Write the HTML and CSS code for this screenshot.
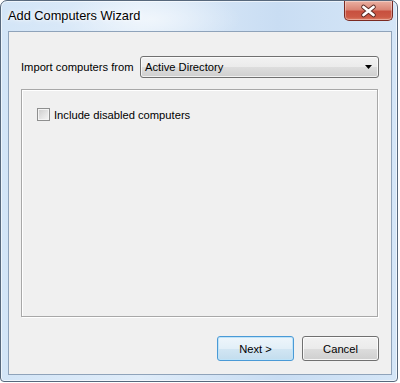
FILE: index.html
```html
<!DOCTYPE html>
<html>
<head>
    <title>Add Computers Wizard</title>
    <link rel="stylesheet" href="styles.css">
</head>
<body>
    <div class="window">
        <div class="titlebar">
            <span class="title">Add Computers Wizard</span>
            <button class="close-btn">
                <svg width="49" height="20" viewBox="0 0 49 20">
                    <path d="M19.5 6 L29.5 14 M29.5 6 L19.5 14" stroke="#5a2a24" stroke-width="4.6" stroke-linecap="round" fill="none"/>
                    <path d="M19.5 6 L29.5 14 M29.5 6 L19.5 14" stroke="#ffffff" stroke-width="2.8" stroke-linecap="round" fill="none"/>
                </svg>
            </button>
        </div>

        <div class="client">
            <!-- Source row -->
            <div class="import-row">
                <label class="import-label">Import computers from</label>
                <div class="combo">
                    <span>Active Directory</span>
                    <svg class="combo-arrow" width="8" height="5" viewBox="0 0 8 5">
                        <path d="M0 0 H7 L3.5 4 Z" fill="#000"/>
                    </svg>
                </div>
            </div>

            <!-- Options group -->
            <div class="group">
                <div class="check-row">
                    <span class="checkbox"></span>
                    <span>Include disabled computers</span>
                </div>
            </div>

            <div class="button-row">
                <button class="btn btn-default">Next &gt;</button>
                <button class="btn">Cancel</button>
            </div>
        </div>
    </div>
</body>
</html>
```

FILE: styles.css
```css
body {
    margin: 0;
    background: #ffffff;
    font-family: "Liberation Sans", Arial, sans-serif;
    font-size: 11.2px;
    color: #000000;
}

.window {
    width: 398px;
    height: 382px;
    box-sizing: border-box;
    border: 1px solid #57687c;
    border-radius: 7px 7px 4px 4px;
    padding: 0 5px 6px 7px;
    display: flex;
    flex-direction: column;
    background:
        radial-gradient(ellipse 90px 30px at 150px 18px, rgba(255,255,255,0.55), rgba(255,255,255,0)),
        linear-gradient(to right, #d3e5f7 0%, #dfecf9 35%, #c9ddf3 70%, #d5e6f7 100%);
    box-shadow: inset 0 0 0 1px rgba(255,255,255,0.6);
}

.titlebar {
    height: 30px;
    display: flex;
    align-items: flex-start;
}

.title {
    margin-top: 7px;
    font-size: 12.8px;
    color: #000;
    text-shadow: 0 0 6px #ffffff, 0 0 3px #ffffff;
}

.close-btn {
    margin-left: auto;
    margin-right: -1px;
    width: 49px;
    height: 20px;
    padding: 0;
    border: 1px solid #7a2a22;
    border-top: none;
    border-radius: 0 0 5px 5px;
    background: linear-gradient(to bottom, #eab0a2 0%, #da8676 45%, #c8503f 55%, #cc5a46 85%, #de8068 100%);
    box-shadow: inset 0 0 0 1px rgba(255,255,255,0.35);
    display: flex;
    align-items: center;
    justify-content: center;
}

.close-btn svg {
    display: block;
    margin: -1px;
}

.client {
    flex: 1;
    background: #f0f0f0;
    border: 1px solid #8fa3ba;
    padding: 0 12px;
    display: flex;
    flex-direction: column;
}

.import-row {
    margin-top: 24px;
    height: 22px;
    display: flex;
    align-items: center;
}

.import-label {
    flex: 1;
    white-space: nowrap;
}

.combo {
    width: 239px;
    height: 22px;
    flex-shrink: 0;
    box-sizing: border-box;
    border: 1px solid #707070;
    border-radius: 3px;
    background: linear-gradient(to bottom, #f2f2f2 0%, #ebebeb 50%, #dddddd 51%, #cfcfcf 100%);
    box-shadow: inset 0 0 0 1px rgba(255,255,255,0.7);
    display: flex;
    align-items: center;
    padding: 0 5px 0 4px;
}

.combo-arrow {
    margin-left: auto;
}

.group {
    margin-top: 11px;
    margin-right: 1px;
    height: 228px;
    box-sizing: border-box;
    border: 1px solid #a8a8a8;
    box-shadow: inset 1px 1px 0 #ffffff, 1px 1px 0 #ffffff;
    padding: 18px 0 0 15px;
}

.check-row {
    display: flex;
    align-items: center;
    gap: 4px;
}

.checkbox {
    width: 13px;
    height: 13px;
    box-sizing: border-box;
    border: 1px solid #8e8f8f;
    background: linear-gradient(135deg, #cbcbcb 0%, #e6e6e6 60%, #f5f5f5 100%);
    box-shadow: inset 0 0 0 1px #f4f4f4;
}

.button-row {
    margin-top: 19px;
    display: flex;
    justify-content: flex-end;
    gap: 8px;
}

.btn {
    width: 77px;
    height: 25px;
    padding: 0;
    border: 1px solid #707070;
    border-radius: 3px;
    font-family: "Liberation Sans", Arial, sans-serif;
    font-size: 11.2px;
    color: #000;
    background: linear-gradient(to bottom, #f2f2f2 0%, #ebebeb 50%, #dddddd 51%, #cfcfcf 100%);
    box-shadow: inset 0 0 0 1px rgba(255,255,255,0.8);
}

.btn-default {
    width: 77px;
    border-color: #4a9ad6;
    background: linear-gradient(to bottom, #eef6fb 0%, #e2eff8 50%, #d2e6f3 51%, #c3ddee 100%);
    box-shadow: inset 0 0 0 1px #bfe3f8;
}
```
